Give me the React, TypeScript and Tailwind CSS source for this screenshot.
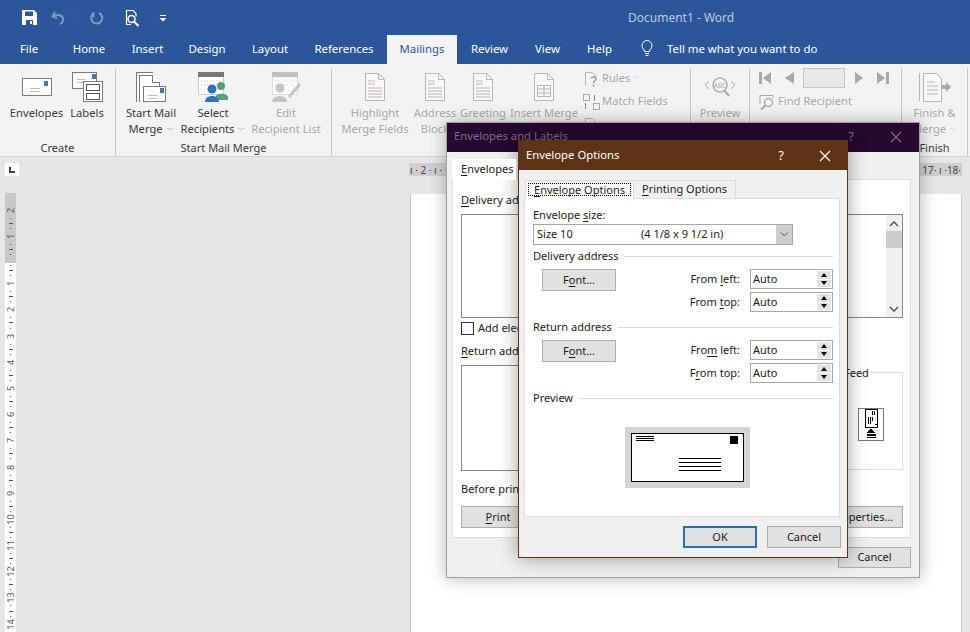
import type { ReactNode } from "react";

const tabs = [
  ["File", "w-[58px]"],
  ["Home", "w-[62px]"],
  ["Insert", "w-[55px]"],
  ["Design", "w-[64px]"],
  ["Layout", "w-[62px]"],
  ["References", "w-[86px]"],
  ["Mailings", "w-[70px]"],
  ["Review", "w-[65px]"],
  ["View", "w-[51px]"],
  ["Help", "w-[53px]"],
];

function U({ children }: { children: ReactNode }) {
  return <span className="underline underline-offset-2">{children}</span>;
}

function DocIcon({ lines = "text" }: { lines?: "text" | "grid" }) {
  return (
    <svg width="24" height="30" viewBox="0 0 24 30" fill="none" stroke="#bcb4b8">
      <path d="M2.500 1.500h13l6 6v21h-19z" fill="#f8f8f8" />
      <path d="M15.500 1.500v6h6" />
      {lines === "text" ? (
        <path d="M5 9h7M5 12h7M5 16h14M5 19h14M5 22h14M5 25h14" />
      ) : (
        <path d="M5.500 13.500h13v11h-13zM5.500 17h13M5.500 21h13M12 13.500v11" />
      )}
    </svg>
  );
}

function BigButton({
  width,
  icon,
  top,
  bottom,
  off,
  caret,
}: {
  width: string;
  icon: ReactNode;
  top: string;
  bottom?: string;
  off?: boolean;
  caret?: boolean;
}) {
  return (
    <div className={`${width} flex flex-col items-center ${off ? "text-[#a8a8a8]" : "text-[#3a3a3a]"}`}>
      <div className="h-[37px] flex items-center justify-center">{icon}</div>
      <div className="h-4 leading-4 whitespace-nowrap">{top}</div>
      {bottom && (
        <div className="h-4 leading-4 whitespace-nowrap">
          {bottom}
          {caret && <span className="ml-1 text-[7px] align-middle">﹀</span>}
        </div>
      )}
    </div>
  );
}

function Group({ width, label, children, off }: { width: string; label?: string; children: ReactNode; off?: boolean }) {
  return (
    <div className={`${width} h-full flex flex-col border-r border-[#c8c8c8] shrink-0`}>
      <div className="flex-1 flex">{children}</div>
      <div className={`h-4 leading-4 text-center text-[11px] ${off ? "text-[#a8a8a8]" : "text-[#3a3a3a]"}`}>{label}</div>
    </div>
  );
}

function Ticks() {
  return (
    <div className="flex-1 flex flex-col items-center justify-around">
      <div className="w-px h-px bg-[#555]" />
      <div className="w-[4px] h-px bg-[#555]" />
      <div className="w-px h-px bg-[#555]" />
    </div>
  );
}

function RulerCell({ n, first }: { n: number; first?: boolean }) {
  return (
    <div className="h-[26.2px] flex flex-col items-center">
      {first && <div className="h-[11px] leading-[11px] -rotate-90 text-[9px] text-[#555]">{n}</div>}
      <Ticks />
      {!first && <div className="h-[11px] leading-[11px] -rotate-90 text-[9px] text-[#555]">{n}</div>}
    </div>
  );
}

function Spin({ value, label }: { value: string; label: ReactNode }) {
  return (
    <div className="flex items-center h-5 justify-end">
      <div className="mr-[10px]">{label}</div>
      <div className="w-[83px] h-5 border border-[#a8a8a8] bg-white flex items-center justify-between pl-[2px] pr-[1px]">
        <span>{value}</span>
        <div className="flex flex-col w-[14px] h-[16px] gap-px">
          <div className="flex-1 bg-[#e3e3e3] flex items-center justify-center">
            <div className="w-0 h-0 border-x-[3px] border-x-transparent border-b-[4px] border-b-black" />
          </div>
          <div className="flex-1 bg-[#e3e3e3] flex items-center justify-center">
            <div className="w-0 h-0 border-x-[3px] border-x-transparent border-t-[4px] border-t-black" />
          </div>
        </div>
      </div>
    </div>
  );
}

function AddressBlock({ title, left, top }: { title: string; left: ReactNode; top: ReactNode }) {
  return (
    <>
      <div className="flex items-center h-4 gap-[6px]">
        <span>{title}</span>
        <div className="flex-1 h-px bg-[#dcdcdc]" />
      </div>
      <div className="flex justify-between mt-[5px] h-[43px]">
        <div className="ml-[9px] w-[74px] h-[22px] bg-[#e1e1e1] border border-[#adadad] flex items-center justify-center">
          <span>
            F<U>o</U>nt...
          </span>
        </div>
        <div className="flex flex-col gap-[3px]">
          <Spin value="Auto" label={left} />
          <Spin value="Auto" label={top} />
        </div>
      </div>
    </>
  );
}

function EnvelopesDialog() {
  return (
    <div className="absolute left-[446px] top-[122px] w-[474px] h-[456px] bg-[#f0f0f0] border border-[#a0a0a0] shadow-[0_0_16px_rgba(0,0,0,0.3)] flex flex-col text-[11px] text-[#1c1c1c]">
      <div className="h-[29px] shrink-0 bg-[#25092f] flex items-center pl-[7px] pr-[17px] pb-[2px] text-[11.3px] text-[#7d6c88]">
        <span>Envelopes and Labels</span>
        <span className="ml-auto mr-[36px] text-[13px]">?</span>
        <svg width="12" height="12" viewBox="0 0 12 12" stroke="#7d6c88" strokeWidth="1.2">
          <path d="M1 1l10 10M11 1L1 11" />
        </svg>
      </div>
      <div className="ml-[5px] mr-[8px] mt-[7px] h-[379px] flex flex-col">
        <div className="h-5 flex">
          <div className="w-[64px] h-[21px] bg-white pl-[9px] leading-[20px] z-10">
            <U>E</U>nvelopes
          </div>
        </div>
        <div className="flex-1 bg-white border border-[#dcdcdc] pl-2 pr-[7px] flex flex-col">
          <div className="h-4 leading-4 mt-[12px]">
            <U>D</U>elivery address:
          </div>
          <div className="h-[104px] mt-[6px] border border-[#828790] flex justify-end shrink-0">
            <div className="w-4 bg-[#f0f0f0] flex flex-col items-center">
              <svg className="mt-[6px]" width="10" height="6" viewBox="0 0 10 6" fill="none" stroke="#555" strokeWidth="1.5">
                <path d="M1 5l4-4 4 4" />
              </svg>
              <div className="w-full h-[17px] mt-[4px] bg-[#cdcdcd]" />
              <svg className="mt-auto mb-[5px]" width="10" height="6" viewBox="0 0 10 6" fill="none" stroke="#555" strokeWidth="1.5">
                <path d="M1 1l4 4 4-4" />
              </svg>
            </div>
          </div>
          <div className="flex items-center mt-1 h-[13px]">
            <div className="w-[13px] h-[13px] border border-[#333] bg-white" />
            <span className="ml-[4px]">Add electronic postage</span>
          </div>
          <div className="h-4 leading-4 mt-[8px]">
            <U>R</U>eturn address:
          </div>
          <div className="flex mt-[6px]">
            <div className="w-[239px] h-[106px] border border-[#828790]" />
            <div className="relative flex-1 ml-[2px] mt-[7px] h-[98px] border border-[#dcdcdc] flex items-center justify-end pr-[18px]">
              <span className="absolute left-[140px] -top-2 h-4 leading-4 bg-white px-px">Feed</span>
              <svg width="26" height="33" viewBox="0 0 26 33" className="mt-[6px]" shapeRendering="crispEdges">
                <rect x="0.500" y="0.500" width="25" height="32" fill="#fff" stroke="#777" />
                <rect x="7" y="1" width="12" height="18" fill="#fff" stroke="#000" />
                <path d="M16 3v4M14 3v4M10 9v7M12 9v7M14 9v4M16.500 16h2" stroke="#000" />
                <path d="M13 21l5 4H8z" fill="#000" />
                <path d="M9 26h9v2H9zM9 29h9v1H9z" fill="#000" />
              </svg>
            </div>
          </div>
          <div className="h-4 leading-4 mt-[10px]">Before printing</div>
          <div className="flex justify-between mt-[9px]">
            <div className="w-[74px] h-[22px] bg-[#e1e1e1] border border-[#adadad] flex items-center justify-center">
              <span>
                <U>P</U>rint
              </span>
            </div>
            <div className="w-[136px] h-[22px] bg-[#e1e1e1] border border-[#adadad] flex items-center justify-center whitespace-nowrap">
              E-postage Properties...
            </div>
          </div>
        </div>
      </div>
      <div className="flex justify-end mr-[8px] mt-[9px]">
        <div className="w-[73px] h-[21px] bg-[#e1e1e1] border border-[#adadad] flex items-center justify-center">Cancel</div>
      </div>
    </div>
  );
}

function OptionsDialog() {
  return (
    <div className="absolute left-[518px] top-[140px] w-[330px] h-[418px] bg-[#f0f0f0] border border-[#5e3316] shadow-[0_0_18px_rgba(0,0,0,0.38)] flex flex-col text-[11px] text-[#1c1c1c]">
      <div className="h-[29px] shrink-0 bg-[#5e3316] text-white flex items-center pl-[7px] pr-[16px] text-[11.3px]">
        <span>Envelope Options</span>
        <span className="ml-auto mr-[35px] text-[13px]">?</span>
        <svg width="12" height="12" viewBox="0 0 12 12" stroke="#fff" strokeWidth="1.2">
          <path d="M1 1l10 10M11 1L1 11" />
        </svg>
      </div>
      <div className="h-[28px] shrink-0 flex items-end pl-[6px]">
        <div className="h-[19px] w-[108px] bg-white border-t border-l border-[#dcdcdc] p-[2px] pb-[3px] z-10 -mb-px">
          <div className="h-full border border-dotted border-black flex items-center justify-center leading-none">
            <span>
              <U>E</U>nvelope Options
            </span>
          </div>
        </div>
        <div className="h-[18px] w-[103px] bg-[#f0f0f0] border-t border-x border-[#dcdcdc] flex items-center justify-center">
          <span>
            <U>P</U>rinting Options
          </span>
        </div>
      </div>
      <div className="ml-[5px] w-[316px] h-[319px] bg-white border border-[#dcdcdc] pl-2 pr-[6px] pt-2 flex flex-col">
        <div className="h-4 leading-4">
          Envelope <U>s</U>ize:
        </div>
        <div className="w-[260px] h-[21px] mt-px border border-[#a8a8a8] flex items-center pl-[3px]">
          <span className="w-[104px]">Size 10</span>
          <span>(4 1/8 x 9 1/2 in)</span>
          <div className="ml-auto w-4 h-full bg-[#cdcdcd] flex items-center justify-center">
            <svg width="9" height="5" viewBox="0 0 9 5" fill="none" stroke="#555">
              <path d="M1 .5l3.500 3.500L8 .5" />
            </svg>
          </div>
        </div>
        <div className="mt-[3px]">
          <AddressBlock
            title="Delivery address"
            left={
              <>
                From <U>l</U>eft:
              </>
            }
            top={
              <>
                From <U>t</U>op:
              </>
            }
          />
        </div>
        <div className="mt-[7px]">
          <AddressBlock
            title="Return address"
            left={
              <>
                Fro<U>m</U> left:
              </>
            }
            top={
              <>
                F<U>r</U>om top:
              </>
            }
          />
        </div>
        <div className="flex items-center h-4 gap-[6px] mt-[7px]">
          <span>Preview</span>
          <div className="flex-1 h-px bg-[#dcdcdc]" />
        </div>
        <div className="ml-[92px] mt-[21px] w-[125px] h-[61px] bg-[#d4d4d4] flex items-center justify-center">
          <svg width="113" height="49" viewBox="0 0 113 49" shapeRendering="crispEdges">
            <rect x="0.500" y="0.500" width="112" height="48" fill="#fff" stroke="#000" />
            <path d="M5 3.500h18M5 5.500h18M5 7.500h18M48 25.500h42M48 29.500h42M48 33.500h42M48 37.500h42" stroke="#000" />
            <rect x="99" y="3" width="8" height="8" fill="#000" />
          </svg>
        </div>
      </div>
      <div className="flex justify-end gap-[10px] mr-[6px] mt-[9px]">
        <div className="w-[74px] h-[22px] bg-[#e1e1e1] border-2 border-[#2a70ad] flex items-center justify-center">OK</div>
        <div className="w-[74px] h-[22px] bg-[#e1e1e1] border border-[#adadad] flex items-center justify-center">Cancel</div>
      </div>
    </div>
  );
}

export default function App() {
  return (
    <div className="relative w-[970px] h-[632px] overflow-hidden flex flex-col bg-[#e6e6e6] font-['Noto_Sans',sans-serif] text-[11.2px]">
      {/* title bar */}
      <div className="h-[35px] shrink-0 bg-[#2b579a] relative flex items-center pl-[22px]">
        <svg width="15" height="15" viewBox="0 0 15 15">
          <path d="M0 0h12l3 3v12H0z" fill="#fff" />
          <path d="M3 1.500h8v4.500H3zM4 10h7v5H4z" fill="#2b579a" />
          <path d="M8 11h2v3H8z" fill="#fff" />
        </svg>
        <svg className="ml-[14px]" width="15" height="14" viewBox="0 0 15 14" fill="none" stroke="#7f9ac2" strokeWidth="2">
          <path d="M4 1L1.500 5.500 6 7M2 5.500c3-2.500 9-2 10 2 .5 2.500-1 4.500-3 5.500" />
        </svg>
        <span className="ml-[3px] text-[7px] text-[#7f9ac2]">﹀</span>
        <svg className="ml-[14px]" width="14" height="14" viewBox="0 0 14 14" fill="none" stroke="#7f9ac2" strokeWidth="2">
          <path d="M9 2a5.500 5.500 0 1 1-5 .2M3.500 1v4h-3" />
        </svg>
        <svg className="ml-[21px]" width="16" height="18" viewBox="0 0 16 18" fill="none" stroke="#fff" strokeWidth="1.2">
          <path d="M6 15.500H1.500v-14H8l3 3v3" />
          <circle cx="6.500" cy="10" r="3.500" strokeWidth="1.500" />
          <path d="M9 12.500l4.500 4.500" strokeWidth="2" />
        </svg>
        <svg className="ml-[18px]" width="8" height="8" viewBox="0 0 8 8" fill="#fff">
          <path d="M1 1h6v1H1zM0.500 4h7L4 7.500z" />
        </svg>
        <span className="absolute left-[628px] top-[9px] text-[12px] text-[#b9c9e2] whitespace-nowrap">Document1 - Word</span>
      </div>

      {/* tabs */}
      <div className="h-[29px] shrink-0 bg-[#2b579a] flex text-white text-[11.4px]">
        {tabs.map(([name, w]) => (
          <div
            key={name}
            className={`${w} flex items-center justify-center pb-[2px] ${name === "Mailings" ? "bg-[#f3f3f3] text-[#2b579a]" : ""}`}
          >
            {name}
          </div>
        ))}
        <div className="ml-[15px] flex items-center pb-[2px]">
          <svg width="12" height="17" viewBox="0 0 12 17" fill="none" stroke="#fff">
            <path d="M3.500 11.500c0-2-2.500-3-2.500-6a5 5 0 0 1 10 0c0 3-2.500 4-2.500 6zM4 13.500h4M4.500 15.500h3" />
          </svg>
          <span className="ml-[14px]">Tell me what you want to do</span>
        </div>
      </div>

      {/* ribbon */}
      <div className="h-[93px] shrink-0 bg-[#f3f3f3] border-b border-[#d4d4d4] flex pt-1">
        <Group width="w-[116px]" label="Create">
          <div className="w-[8px]" />
          <BigButton
            width="w-[57px]"
            top="Envelopes"
            icon={
              <svg width="30" height="18" viewBox="0 0 30 18" fill="#fff" stroke="#7a7a7a" shapeRendering="crispEdges">
                <rect x="0.500" y="0.500" width="29" height="17" />
                <path d="M8 10.500h10M8 13.500h10" stroke="#bbb" />
                <rect x="22" y="3" width="4" height="5" fill="#4a76ae" stroke="none" />
              </svg>
            }
          />
          <BigButton
            width="w-[44px]"
            top="Labels"
            icon={
              <svg width="31" height="30" viewBox="0 0 31 30" fill="#fff" stroke="#7a7a7a" shapeRendering="crispEdges">
                <rect x="0.500" y="0.500" width="24" height="16" />
                <rect x="20" y="2" width="4" height="5" fill="#4a76ae" stroke="none" />
                <path d="M5 7.500h8M5 10.500h8" stroke="#bbb" />
                <rect x="11.500" y="9.500" width="19" height="20" />
                <rect x="14.500" y="12.500" width="13" height="5.500" stroke="#555" />
                <rect x="14.500" y="21.500" width="13" height="5.500" stroke="#555" />
              </svg>
            }
          />
        </Group>
        <Group width="w-[216px]" label="Start Mail Merge">
          <div className="w-[5px]" />
          <BigButton
            width="w-[60px]"
            top="Start Mail"
            bottom="Merge"
            caret
            icon={
              <svg width="30" height="30" viewBox="0 0 30 30" fill="#fff" stroke="#7a7a7a" shapeRendering="crispEdges">
                <path d="M0.500 29.500V0.500h16" />
                <path d="M3.500 29.500V3.500h13l7 7v7" />
                <path d="M16.500 3.500v7h7" />
                <rect x="7.500" y="14.500" width="22" height="15" />
                <path d="M12 23.500h9M12 26.500h9" stroke="#bbb" />
                <rect x="24" y="16" width="4" height="5" fill="#4a76ae" stroke="none" />
              </svg>
            }
          />
          <BigButton
            width="w-[64px]"
            top="Select"
            bottom="Recipients"
            caret
            icon={
              <svg width="30" height="30" viewBox="0 0 30 30">
                <rect x="0.500" y="0.500" width="25" height="22" fill="#fff" stroke="#ccc" />
                <rect x="0" y="0" width="26" height="5" fill="#777" />
                <path d="M3 9h20M3 13h20M3 17h10" stroke="#bbb" strokeDasharray="1 2" />
                <circle cx="23" cy="14" r="4" fill="#5c9c7e" />
                <path d="M17 26c0-5 12-6 13-1v3H17z" fill="#5c9c7e" />
                <circle cx="14" cy="17" r="4.500" fill="#2f72b5" />
                <path d="M7 30c0-8 14-8 14 0z" fill="#2f72b5" />
              </svg>
            }
          />
          <BigButton
            width="w-[82px]"
            top="Edit"
            bottom="Recipient List"
            off
            icon={
              <svg width="32" height="30" viewBox="0 0 32 30">
                <rect x="2.500" y="0.500" width="25" height="22" fill="#fafafa" stroke="#ddd" />
                <rect x="2" y="0" width="26" height="5" fill="#c0c0c0" />
                <path d="M5 9h20M5 13h20" stroke="#d5d5d5" strokeDasharray="1 2" />
                <circle cx="10" cy="16" r="4.500" fill="#c4c4c4" />
                <path d="M2 30c0-8 15-8 15 0z" fill="#c4c4c4" />
                <path d="M19 25l11-13" stroke="#c4c4c4" strokeWidth="3" />
              </svg>
            }
          />
        </Group>
        <Group width="w-[359px]" off>
          <div className="w-[5px]" />
          <BigButton width="w-[76px]" top="Highlight" bottom="Merge Fields" off icon={<DocIcon />} />
          <BigButton width="w-[44px]" top="Address" bottom="Block" off icon={<DocIcon />} />
          <BigButton width="w-[52px]" top="Greeting" off icon={<DocIcon />} />
          <BigButton width="w-[70px]" top="Insert Merge" off icon={<DocIcon lines="grid" />} />
          <div className="ml-[4px] flex flex-col text-[#a8a8a8]">
            <div className="h-[23px] mt-[-1px] flex items-center">
              <svg width="17" height="16" viewBox="0 0 17 16" fill="none" stroke="#bcb4b8">
                <path d="M2.500 14.500v-13h7l3 3v2" />
                <path d="M8 7.500c1-2 5-2 5 .5 0 2-2.500 2-2.500 4M10.500 13.500v2" stroke="#999" strokeWidth="1.500" />
              </svg>
              <span className="ml-[2px]">Rules</span>
              <span className="ml-[3px] text-[7px]">﹀</span>
            </div>
            <div className="h-[23px] flex items-center">
              <svg width="17" height="16" viewBox="0 0 17 16" fill="none" stroke="#b0a8ac" shapeRendering="crispEdges">
                <rect x="0.500" y="0.500" width="6" height="6" />
                <rect x="10.500" y="9.500" width="6" height="6" />
                <path d="M11 1v6M2 9v6" stroke="#888" />
              </svg>
              <span className="ml-[2px]">Match Fields</span>
            </div>
            <div className="h-[23px] flex items-center">
              <svg width="17" height="16" viewBox="0 0 17 16" fill="none" stroke="#bcb4b8">
                <path d="M2.500 14.500v-13h7l3 3v9" />
              </svg>
            </div>
          </div>
        </Group>
        <Group width="w-[59px]" off>
          <BigButton
            width="w-[59px]"
            top="Preview"
            off
            icon={
              <svg width="32" height="20" viewBox="0 0 32 20" fill="none" stroke="#b0b0b0">
                <path d="M5 4L1 8l4 4M27 4l4 4-4 4" />
                <circle cx="16" cy="8" r="7" strokeWidth="1.500" />
                <text x="16" y="10.500" textAnchor="middle" fontSize="6.500" fill="#aaa" stroke="none">ABC</text>
                <path d="M20 13l5 6" strokeWidth="2.500" />
              </svg>
            }
          />
        </Group>
        <Group width="w-[152px]" off>
          <div className="pl-[9px] flex flex-col text-[#a8a8a8]">
            <div className="h-[20px] flex items-center">
              <svg width="12" height="12" viewBox="0 0 12 12" fill="#a9a9a9">
                <path d="M0 0h3v12H0zM12 0v12L4 6z" />
              </svg>
              <svg className="ml-[14px]" width="9" height="12" viewBox="0 0 9 12" fill="#a9a9a9">
                <path d="M9 0v12L0 6z" />
              </svg>
              <div className="ml-[9px] w-[42px] h-[20px] bg-[#e8e8e8] border border-[#c6c6c6]" />
              <svg className="ml-[10px]" width="8" height="12" viewBox="0 0 8 12" fill="#a9a9a9">
                <path d="M0 0v12l8-6z" />
              </svg>
              <svg className="ml-[14px]" width="12" height="12" viewBox="0 0 12 12" fill="#a9a9a9">
                <path d="M12 0H9v12h3zM0 0v12l8-6z" />
              </svg>
            </div>
            <div className="h-[23px] mt-[2px] flex items-center">
              <svg width="16" height="16" viewBox="0 0 16 16" fill="none" stroke="#a9a9a9">
                <path d="M1 10V1.500h13v3" />
                <circle cx="9.500" cy="8.500" r="4" strokeWidth="1.500" />
                <path d="M6.500 11.500L2 15.500" strokeWidth="2" />
              </svg>
              <span className="ml-[3px]">Find Recipient</span>
            </div>
          </div>
        </Group>
        <Group width="w-[66px]" label="Finish">
          <BigButton
            width="w-[66px]"
            top="Finish &"
            bottom="Merge"
            off
            caret
            icon={
              <svg width="32" height="30" viewBox="0 0 32 30" fill="none" stroke="#bcb4b8">
                <path d="M0.500 29V1M4.500 29.500V1.500h13l5 5v23z" fill="#f8f8f8" />
                <path d="M8 10h8M8 14h11M8 18h11M8 22h11" />
                <path d="M22 13h5v-3l5 5-5 5v-3h-5z" fill="#a9a9a9" stroke="none" />
              </svg>
            }
          />
        </Group>
      </div>

      {/* document area */}
      <div className="flex-1 flex min-h-0">
        <div className="w-[22px] shrink-0 pl-[5px] pt-[6px]">
          <div className="w-[14px] h-[13px] bg-white flex items-center justify-center">
            <div className="w-[6px] h-[6px] border-l-2 border-b-2 border-[#444]" />
          </div>
          <div className="w-[11px] mt-[17px] flex flex-col">
            <div className="h-[70px] bg-[#c8c8c8] flex flex-col pt-[12px] overflow-hidden">
              <RulerCell n={2} first />
              <RulerCell n={1} first />
            </div>
            <div className="bg-white h-[380px] overflow-hidden">
              {[1, 2, 3, 4, 5, 6, 7, 8, 9, 10, 11, 12, 13, 14].map((n) => (
                <RulerCell key={n} n={n} />
              ))}
            </div>
          </div>
        </div>
        <div className="ml-[387px] w-[553px] flex flex-col">
          <div className="mt-[6px] h-[13px] bg-[#cfcfcf] flex justify-between items-center text-[10px] leading-none text-[#444] pl-[1px] pr-[1px]">
            <span>ı · 2 · ı ·</span>
            <span>17· ı ·18·</span>
          </div>
          <div className="ml-[1px] mt-[18px] flex-1 bg-white border-l border-r border-[#c6c6c6]" />
        </div>
      </div>

      <EnvelopesDialog />
      <OptionsDialog />
    </div>
  );
}
